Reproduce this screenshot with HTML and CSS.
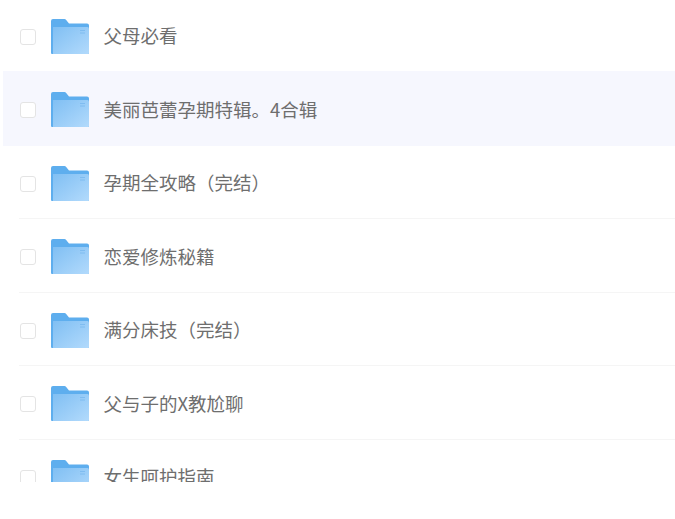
FILE: index.html
```html
<!DOCTYPE html>
<html lang="zh-CN">
<head>
<meta charset="utf-8">
<title>文件列表</title>
<link rel="stylesheet" href="styles.css">
</head>
<body>
<svg class="defs" width="0" height="0" aria-hidden="true">
  <defs>
    <linearGradient id="front" x1="0" y1="0" x2="1" y2="1">
      <stop offset="0" stop-color="#80bff3"/>
      <stop offset="1" stop-color="#b2dafc"/>
    </linearGradient>
    <symbol id="folder" viewBox="0 0 38 35">
      <path d="M0 2a2 2 0 0 1 2-2h11.500a2 2 0 0 1 1.500.7L18 4.500h18a2 2 0 0 1 2 2V12H0z" fill="#5eaeee"/>
      <path d="M0 6h36a2 2 0 0 1 2 2v25.500a1.500 1.500 0 0 1-1.500 1.500H1a1 1 0 0 1-1-1z" fill="#5eaeee"/>
      <path d="M2 8h34.500a1.500 1.500 0 0 1 1.500 1.500v24a1.500 1.500 0 0 1-1.500 1.500H2z" fill="url(#front)"/>
      <path d="M29 11.500h5M29 14h5" stroke="#7fbcf0" stroke-width="1"/>
    </symbol>
  </defs>
</svg>
<main class="viewport">
  <ul class="list">
    <li class="row"><span class="check"></span><svg class="folder"><use href="#folder"/></svg><span class="name">父母必看</span></li>
    <li class="row active"><span class="check"></span><svg class="folder"><use href="#folder"/></svg><span class="name">美丽芭蕾孕期特辑。4合辑</span></li>
    <li class="row"><span class="check"></span><svg class="folder"><use href="#folder"/></svg><span class="name">孕期全攻略（完结）</span></li>
    <li class="row"><span class="check"></span><svg class="folder"><use href="#folder"/></svg><span class="name">恋爱修炼秘籍</span></li>
    <li class="row"><span class="check"></span><svg class="folder"><use href="#folder"/></svg><span class="name">满分床技（完结）</span></li>
    <li class="row"><span class="check"></span><svg class="folder"><use href="#folder"/></svg><span class="name">父与子的X教尬聊</span></li>
    <li class="row"><span class="check"></span><svg class="folder"><use href="#folder"/></svg><span class="name">女生呵护指南</span></li>
  </ul>
</main>
</body>
</html>
```

FILE: styles.css
```css
* { box-sizing: border-box; }
html, body { margin: 0; padding: 0; background: #fff; overflow: hidden; }
body { height: 519px; }
.defs { display: block; height: 0; }
.viewport { height: 482px; overflow: hidden; padding-left: 3px; }
.list { list-style: none; margin: -1.5px 0 0; padding: 0; }
.row {
  position: relative;
  height: 73.5px;
  display: flex;
  align-items: center;
  padding-left: 17px;
  font-family: "Microsoft YaHei", "Noto Sans CJK SC", sans-serif;
  font-size: 18.5px;
  color: #6e6e6e;
}
.row::after {
  content: "";
  position: absolute;
  left: 16px;
  right: 0;
  bottom: 0;
  height: 1px;
  background: #f5f5f5;
}
.row.active { background: #f6f7fe; box-shadow: 0 -1px 0 #f6f7fe; }
.row.active::after, .row:first-child::after { display: none; }
.check {
  width: 16px;
  height: 16px;
  flex: none;
  border: 1.5px solid #e4e4e4;
  border-radius: 3px;
  background: #fff;
  margin-top: 3px;
}
.folder { width: 38px; height: 35px; flex: none; margin-left: 15px; margin-top: 2px; }
.name { margin-left: 14.500px; white-space: nowrap; }
```
